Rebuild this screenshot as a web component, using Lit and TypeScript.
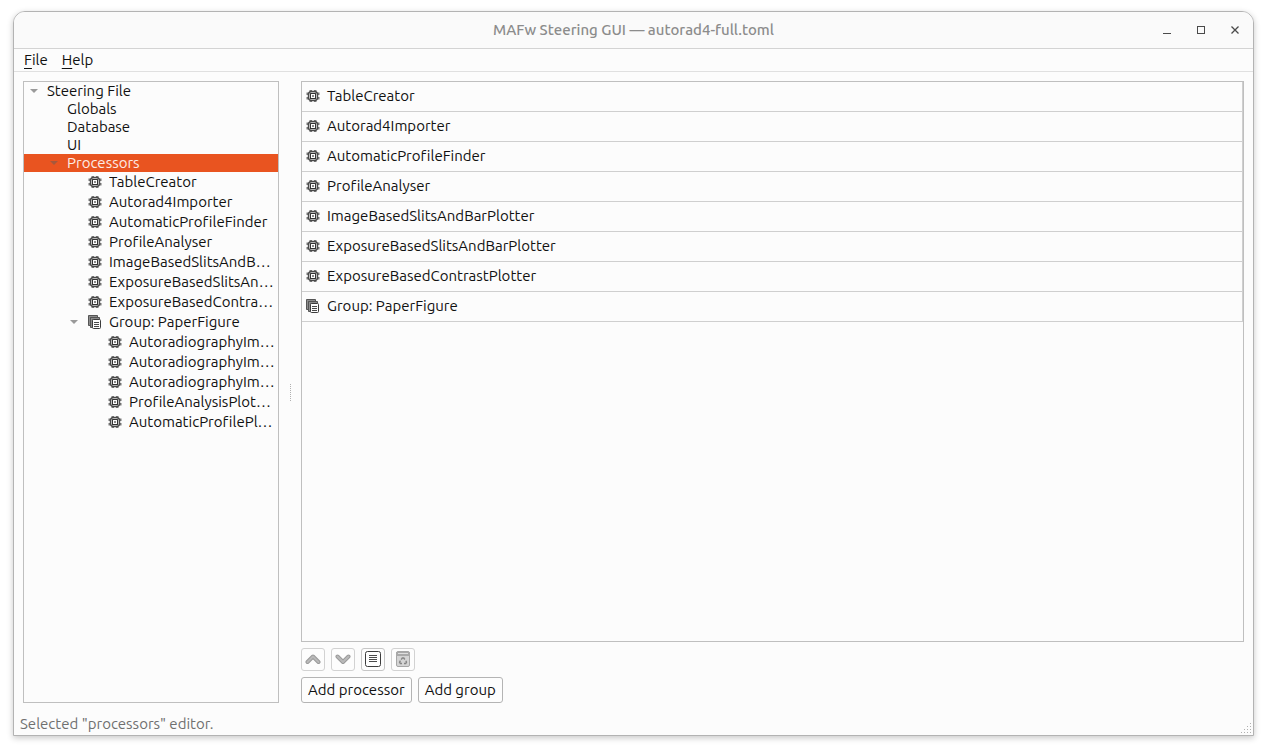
import { LitElement, html, css, svg, nothing } from "lit";
import { customElement, property, state } from "lit/decorators.js";

type IconName = "chip" | "group" | "up" | "down" | "list" | "trash" | "minimize" | "maximize" | "close";

const glyphs: Record<IconName, unknown> = {
  chip: svg`
    <path d="M4.500 2h2.500v12H4.500zM9 2h2.500v12H9zM1.500 4.500h13V7h-13zM1.500 9h13v2.500h-13z" fill="#777"/>
    <rect x="2.800" y="2.800" width="10.400" height="10.400" rx="4" fill="#4a4a4a"/>
    <rect x="4.200" y="4.200" width="7.600" height="7.600" rx="2.500" fill="#d8d8d8"/>
    <rect x="5" y="5" width="6" height="6" rx=".5" fill="#333"/>
    <rect x="6" y="6" width="4" height="4" fill="#fcfcfc"/>
    <rect x="7" y="7" width="2" height="2" fill="#8a8a8a"/>`,
  group: svg`
    <path d="M1.500 1.500h9v2h-7v8h-2z" fill="#8c8c8c" stroke="#555"/>
    <path d="M3.500 3.500h9v2h-7v8h-2z" fill="#8c8c8c" stroke="#555"/>
    <rect x="5.500" y="5.500" width="8" height="9" rx="1" fill="#fcfcfc" stroke="#3c3c3c"/>
    <path d="M7 8.500h5M7 10.500h5M7 12.500h5" stroke="#4a4a4a"/>`,
  up: svg`<path d="M2.500 11L8 5.500l5.500 5.500" fill="none" stroke="#9a9a9a" stroke-width="4" stroke-linecap="round" stroke-linejoin="round"/>
    <path d="M2.500 11L8 5.500l5.500 5.500" fill="none" stroke="#b9b9b9" stroke-width="2" stroke-linecap="round" stroke-linejoin="round"/>`,
  down: svg`<path d="M2.500 5.500L8 11l5.500-5.500" fill="none" stroke="#9a9a9a" stroke-width="4" stroke-linecap="round" stroke-linejoin="round"/>
    <path d="M2.500 5.500L8 11l5.500-5.500" fill="none" stroke="#b9b9b9" stroke-width="2" stroke-linecap="round" stroke-linejoin="round"/>`,
  list: svg`<rect x=".5" y=".5" width="15" height="15" rx="2" fill="#fdfdfd" stroke="#3c3c3c"/>
    <path d="M4 4.500h8M4 6.500h8M4 8.500h8M4 10.500h8" stroke="#4a4a4a"/>`,
  trash: svg`<rect x="1.500" y=".5" width="13" height="15" rx="1.500" fill="#d4d4d4" stroke="#a6a6a6"/>
    <path d="M1 1h14v4H1z" fill="#a9a9a9"/><path d="M3 2h10v1H3z" fill="#dedede"/>
    <path d="M6.200 8.600L7.300 7h1.500l1 1.500M10.900 9.800l.6 1.400-.8 1.300H9M7 12.500H5.400l-.8-1.300.8-1.500" fill="none" stroke="#858585" stroke-width="1.400"/>`,
  minimize: svg`<path d="M4 11.500h8" stroke="#4a4a4a"/>`,
  maximize: svg`<rect x="4.500" y="4.500" width="7" height="7" fill="none" stroke="#4a4a4a"/>`,
  close: svg`<path d="M4.500 4.500l7 7M11.500 4.500l-7 7" stroke="#4a4a4a" stroke-width="1.300"/>`,
};

@customElement("ui-icon")
class UiIcon extends LitElement {
  @property() name: IconName = "chip";
  static styles = css`
    :host { display: block; flex: none; width: 16px; height: 16px; }
    svg { display: block; width: 16px; height: 16px; }
  `;
  render() {
    return html`<svg viewBox="0 0 16 16" aria-hidden="true">${glyphs[this.name]}</svg>`;
  }
}

interface TreeNode {
  label: string;
  icon?: IconName;
  children?: TreeNode[];
}

const chip = (label: string): TreeNode => ({ label, icon: "chip" });

const processors: TreeNode[] = [
  chip("TableCreator"),
  chip("Autorad4Importer"),
  chip("AutomaticProfileFinder"),
  chip("ProfileAnalyser"),
  chip("ImageBasedSlitsAndBarPlotter"),
  chip("ExposureBasedSlitsAndBarPlotter"),
  chip("ExposureBasedContrastPlotter"),
  {
    label: "Group: PaperFigure",
    icon: "group",
    children: [
      chip("AutoradiographyImporter"),
      chip("AutoradiographyImageFilter"),
      chip("AutoradiographyImagePlotter"),
      chip("ProfileAnalysisPlotter"),
      chip("AutomaticProfilePlotter"),
    ],
  },
];

const steeringFile: TreeNode = {
  label: "Steering File",
  children: [
    { label: "Globals" },
    { label: "Database" },
    { label: "UI" },
    { label: "Processors", children: processors },
  ],
};

@customElement("steering-tree")
class SteeringTree extends LitElement {
  @state() private selected = "Processors";
  static styles = css`
    :host { display: block; box-sizing: border-box; border: 1px solid #bfbfbf; overflow: hidden; }
    ul { list-style: none; margin: 0; padding: 0; }
    ul ul .row { padding-left: 24px; }
    ul ul ul .row { padding-left: 44px; }
    ul ul ul ul .row { padding-left: 64px; }
    .row { display: flex; align-items: center; height: 18px; padding-left: 4px; cursor: default; }
    .row.with-icon { height: 20px; }
    .row.selected { background: #e95420; color: #fcebe5; }
    .arrow { flex: none; width: 12px; height: 4px; margin-right: 7px; }
    .arrow.open::before {
      content: ""; display: block; width: 8px; height: 4px; margin-left: 2px;
      background: #9a9a9a; clip-path: polygon(0 0, 100% 0, 50% 100%);
    }
    .selected .arrow.open::before { background: #a5583c; }
    .with-icon .label { margin-left: 6px; }
    .label { overflow: hidden; white-space: nowrap; text-overflow: ellipsis; min-width: 0; padding-right: 3px; }
  `;
  private node(n: TreeNode): unknown {
    const cls = `row ${n.icon ? "with-icon" : ""} ${n.label === this.selected ? "selected" : ""}`;
    return html`<li role="treeitem">
      <div class=${cls} @click=${() => (this.selected = n.label)}>
        <span class="arrow ${n.children ? "open" : ""}"></span>
        ${n.icon ? html`<ui-icon .name=${n.icon}></ui-icon>` : nothing}
        <span class="label">${n.label}</span>
      </div>
      ${n.children ? html`<ul role="group">${n.children.map((c) => this.node(c))}</ul>` : nothing}
    </li>`;
  }
  render() {
    return html`<ul role="tree">${this.node(steeringFile)}</ul>`;
  }
}

@customElement("app-root")
class AppRoot extends LitElement {
  static styles = css`
    :host {
      display: flex; box-sizing: border-box; height: 100vh; padding: 11px 13px 16px;
      background: #fff; color: #111;
      font: 15px/18px Ubuntu, "Noto Sans", "Open Sans", sans-serif;
      font-variant-ligatures: none;
    }
    .window {
      flex: 1; min-width: 0; display: flex; flex-direction: column;
      border: 1px solid #b3b3b3; border-radius: 12px 12px 0 0; background: #fcfcfc;
      box-shadow: 0 2px 6px rgba(0, 0, 0, .22); overflow: hidden;
    }
    .titlebar {
      display: grid; grid-template-columns: 1fr auto 1fr; align-items: center;
      height: 36px; border-bottom: 1px solid #d3d3d3; background: #fafafa;
    }
    h1 { grid-column: 2; margin: 0; font-size: 15px; line-height: 18px; font-weight: 500; color: #8c8c8c; }
    .controls { display: flex; justify-content: flex-end; gap: 18px; padding-right: 10px; }
    button { font: inherit; color: inherit; margin: 0; padding: 0; }
    .controls button { border: 0; background: none; }
    .menubar { display: flex; gap: 14px; padding: 0 10px; height: 22px; border-bottom: 1px solid #e0e0e0; }
    .menubar button { border: 0; background: none; line-height: 22px; }
    .menubar u { text-underline-offset: 3px; }
    .body { flex: 1; min-height: 0; display: flex; padding: 9px 9px 0; }
    steering-tree { width: 256px; flex: none; }
    .splitter { width: 22px; flex: none; display: flex; align-items: center; justify-content: center; }
    .splitter::before { content: ""; height: 17px; border-left: 1px dotted #b0b0b0; }
    .editor { flex: 1; min-width: 0; display: flex; flex-direction: column; gap: 6px; }
    .list { flex: 1; margin: 0; padding: 0; list-style: none; border: 1px solid #bfbfbf; }
    .list li {
      display: flex; align-items: center; gap: 6px; height: 28px; padding: 0 3px 1px;
      border-bottom: 1px solid #cfcfcf; border-right: 1px solid #cfcfcf;
    }
    .tools, .actions { display: flex; gap: 6px; }
    .tools button, .actions button { box-sizing: border-box; border: 1px solid #c6c6c6; border-radius: 3px; background: #fdfdfd; }
    .tools button { width: 24px; height: 23px; padding: 0 3px 1px; }
    .actions button { height: 26px; padding: 0 6px; border-color: #b4b4b4; }
    .tools button:disabled { border-color: #d2d2d2; }
    .status { display: flex; align-items: flex-end; justify-content: space-between; height: 32px; padding-left: 6px; color: #707070; }
    .status output { padding-bottom: 2px; }
    .grip { width: 12px; height: 12px; padding: 0 1px 1px 0; fill: #b0b0b0; }
  `;
  render() {
    return html`<main class="window">
      <header class="titlebar">
        <h1>MAFw Steering GUI — autorad4-full.toml</h1>
        <div class="controls">
          <button aria-label="Minimize"><ui-icon name="minimize"></ui-icon></button>
          <button aria-label="Maximize"><ui-icon name="maximize"></ui-icon></button>
          <button aria-label="Close"><ui-icon name="close"></ui-icon></button>
        </div>
      </header>
      <nav class="menubar">
        <button><u>F</u>ile</button>
        <button><u>H</u>elp</button>
      </nav>
      <div class="body">
        <steering-tree></steering-tree>
        <div class="splitter"></div>
        <section class="editor">
          <ul class="list">
            ${processors.map((p) => html`<li><ui-icon .name=${p.icon!}></ui-icon><span>${p.label}</span></li>`)}
          </ul>
          <div class="tools">
            <button disabled aria-label="Move up"><ui-icon name="up"></ui-icon></button>
            <button disabled aria-label="Move down"><ui-icon name="down"></ui-icon></button>
            <button aria-label="Edit"><ui-icon name="list"></ui-icon></button>
            <button disabled aria-label="Remove"><ui-icon name="trash"></ui-icon></button>
          </div>
          <div class="actions">
            <button>Add processor</button>
            <button>Add group</button>
          </div>
        </section>
      </div>
      <footer class="status">
        <output>Selected "processors" editor.</output>
        <svg class="grip" viewBox="0 0 12 12" aria-hidden="true">
          <path d="M10 1h1v1h-1zM7 4h1v1H7zM10 4h1v1h-1zM4 7h1v1H4zM7 7h1v1H7zM10 7h1v1h-1zM1 10h1v1H1zM4 10h1v1H4zM7 10h1v1H7zM10 10h1v1h-1z"/>
        </svg>
      </footer>
    </main>`;
  }
}
